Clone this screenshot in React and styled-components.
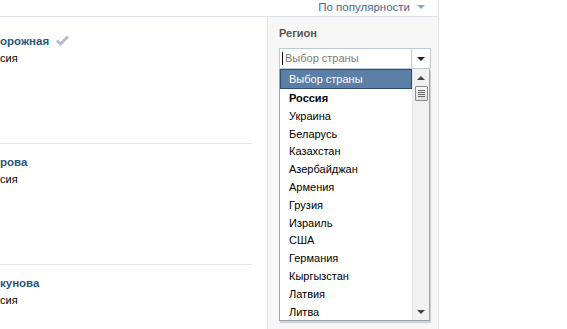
import React from "react";
import styled, { createGlobalStyle } from "styled-components";

const GlobalStyle = createGlobalStyle`
  body {
    margin: 0;
    background: #fff;
    font-family: Tahoma, "Liberation Sans", sans-serif;
    font-size: 11px;
  }
`;

const people = [
  { name: "орожная", city: "сия", verified: true },
  { name: "рова", city: "сия" },
  { name: "кунова", city: "сия" },
];

const countries = [
  "Украина",
  "Беларусь",
  "Казахстан",
  "Азербайджан",
  "Армения",
  "Грузия",
  "Израиль",
  "США",
  "Германия",
  "Кыргызстан",
  "Латвия",
  "Литва",
];

const Check = () => (
  <svg width="13" height="11" viewBox="0 0 13 11">
    <path d="M1 5.5 L4.5 9 L12 1.5" fill="none" stroke="#b4bcc5" strokeWidth="2.8" />
  </svg>
);

const App = () => {
  return (
    <>
      <GlobalStyle />
      <Page>
        <TopBar>
          <SortLink>
            По популярности <Caret />
          </SortLink>
        </TopBar>
        <Main>
          <Results>
            {people.map((p, i) => (
              <Person key={i} first={i === 0}>
                <Name>
                  {p.name}
                  {p.verified && <Check />}
                </Name>
                <City>{p.city}</City>
              </Person>
            ))}
          </Results>
          <Filters>
            <Label>Регион</Label>
            <Select>
              <Placeholder>Выбор страны</Placeholder>
              <ArrowBtn>
                <Caret dark />
              </ArrowBtn>
            </Select>
            <List>
              <Options>
                <Option selected>Выбор страны</Option>
                <Option bold>Россия</Option>
                {countries.map((c) => (
                  <Option key={c}>{c}</Option>
                ))}
              </Options>
              <Scroll>
                <ScrollArrow />
                <Thumb>
                  <span />
                  <span />
                  <span />
                  <span />
                </Thumb>
                <Track />
                <ScrollArrow down />
              </Scroll>
            </List>
          </Filters>
        </Main>
      </Page>
    </>
  );
};

export default App;

const Page = styled.div`
  width: 438px;
  height: 329px;
  border-right: 1px solid #e1e4e8;
  overflow: hidden;
`;

const TopBar = styled.div`
  height: 16px;
  border-bottom: 1px solid #dfe3e8;
  display: flex;
  justify-content: flex-end;
  align-items: center;
  padding-right: 13px;
`;

const SortLink = styled.div`
  color: #45688e;
  display: flex;
  align-items: center;
  gap: 7px;
  margin-top: -2px;
  font-size: 11.5px;
`;

const Caret = styled.span`
  width: 0;
  height: 0;
  border-left: 4px solid transparent;
  border-right: 4px solid transparent;
  border-top: 4px solid ${(p) => (p.dark ? "#222" : "#8fa3b8")};
`;

const Main = styled.div`
  display: flex;
  height: 312px;
`;

const Results = styled.div`
  width: 252px;
  padding-right: 15px;
`;

const Person = styled.div`
  height: ${(p) => (p.first ? "126px" : "121px")};
  border-top: ${(p) => (p.first ? "none" : "1px solid #e7e8ec")};
  box-sizing: border-box;
  padding-top: ${(p) => (p.first ? "16px" : "10px")};
`;

const Name = styled.div`
  color: #2b587a;
  font-weight: bold;
  font-size: 11.5px;
  display: flex;
  align-items: center;
  gap: 7px;
  height: 15px;
`;

const City = styled.div`
  color: #000;
  margin-top: 4px;
`;

const Filters = styled.div`
  width: 159px;
  border-left: 1px solid #e3e6ea;
  background: #f7f7f7;
  padding: 10px 0 0 11px;
`;

const Label = styled.div`
  color: #555;
  font-weight: bold;
  height: 14px;
`;

const Select = styled.div`
  margin-top: 7px;
  width: 150px;
  height: 19px;
  border: 1px solid #c0cad5;
  background: #fff;
  display: flex;
`;

const Placeholder = styled.div`
  flex: 1;
  color: #7a7a7a;
  padding-left: 2px;
  border-left: 1px solid #000;
  margin: 3px 0 3px 2px;
  line-height: 13px;
`;

const ArrowBtn = styled.div`
  width: 18px;
  border-left: 1px solid #c0cad5;
  display: flex;
  align-items: center;
  justify-content: center;
`;

const List = styled.div`
  width: 149px;
  height: 251px;
  border: 1px solid #9aa2ab;
  border-top: none;
  background: #fff;
  display: flex;
  box-shadow: 1px 2px 1px rgba(0, 0, 0, 0.15);
`;

const Options = styled.div`
  flex: 1;
  overflow: hidden;
`;

const Option = styled.div`
  height: ${(p) => (p.selected ? "18px" : "17.8px")};
  line-height: 19px;
  padding-left: ${(p) => (p.selected ? "8px" : "9px")};
  color: ${(p) => (p.selected ? "#fff" : "#000")};
  background: ${(p) => (p.selected ? "#5b7fa6" : "#fff")};
  border: ${(p) => (p.selected ? "1px solid #2f4e6f" : "none")};
  font-weight: ${(p) => (p.bold ? "bold" : "normal")};
  white-space: nowrap;
`;

const Scroll = styled.div`
  width: 16px;
  background: #f1f1f1;
  border-left: 1px solid #e4e4e4;
  display: flex;
  flex-direction: column;
  align-items: center;
`;

const ScrollArrow = styled.div`
  height: 17px;
  width: 16px;
  display: flex;
  align-items: center;
  justify-content: center;
  &::after {
    content: "";
    border-left: 4px solid transparent;
    border-right: 4px solid transparent;
    ${(p) =>
      p.down ? "border-top: 4px solid #444;" : "border-bottom: 4px solid #444;"}
  }
`;

const Thumb = styled.div`
  width: 13px;
  height: 15px;
  box-sizing: border-box;
  border: 1px solid #8a8a8a;
  border-radius: 1px;
  background: linear-gradient(#f7f7f7, #dedede);
  display: flex;
  flex-direction: column;
  justify-content: center;
  gap: 1px;
  padding: 0 2px;
  span {
    height: 1px;
    background: #666;
  }
`;

const Track = styled.div`
  flex: 1;
`;
